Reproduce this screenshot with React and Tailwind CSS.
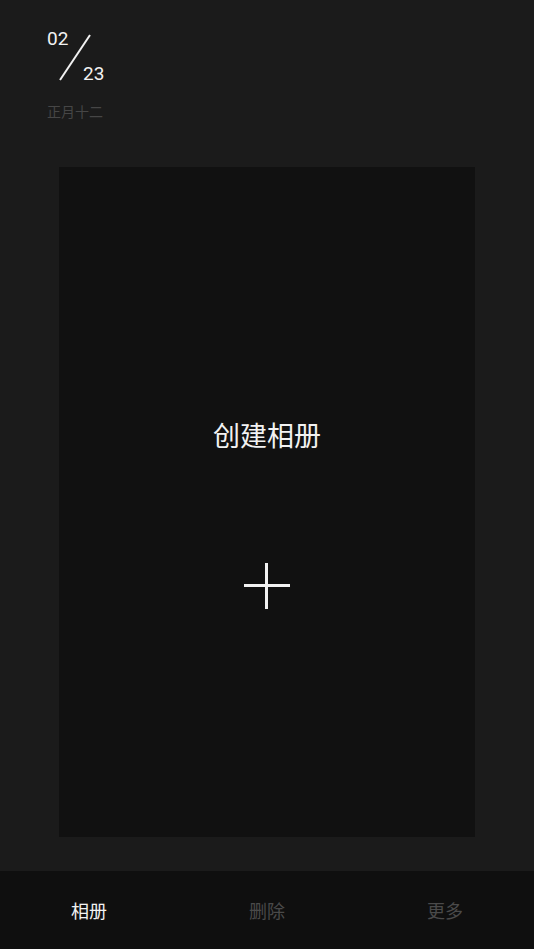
import React from 'react';

const tabs = [
    { label: '相册', active: true },
    { label: '删除', active: false },
    { label: '更多', active: false },
];

const App = () => {
    return (
        <div
            className="w-[534px] h-[949px] bg-[#1b1b1b] flex flex-col overflow-hidden"
            style={{ fontFamily: '"Noto Sans CJK SC", Roboto, sans-serif' }}
        >
            {/* date header */}
            <div className="pl-[47px] pt-[26px] h-[167px] flex flex-col">
                <div className="relative w-[60px] h-[60px]">
                    <span className="absolute left-0 top-0 text-[19px] leading-[26px] text-[#f2f2f2] font-[Roboto]">02</span>
                    <svg className="absolute left-[11px] top-[8px]" width="34" height="48" viewBox="0 0 34 48">
                        <line x1="2" y1="46" x2="32" y2="1" stroke="#f2f2f2" strokeWidth="2" />
                    </svg>
                    <span className="absolute left-[36px] top-[35px] text-[19px] leading-[26px] text-[#f2f2f2] font-[Roboto]">23</span>
                </div>
                <span className="mt-[15px] text-[14px] leading-[20px] text-[#464646]">正月十二</span>
            </div>

            {/* album card */}
            <div className="mx-[59px] h-[670px] bg-[#111111] flex flex-col items-center">
                <span className="mt-[249px] text-[27px] leading-[38px] text-[#f2f2f2]">创建相册</span>
                <svg className="mt-[109px]" width="46" height="46" viewBox="0 0 46 46">
                    <line x1="0" y1="22.5" x2="46" y2="22.5" stroke="#f2f2f2" strokeWidth="3" />
                    <line x1="22.5" y1="0" x2="22.5" y2="46" stroke="#f2f2f2" strokeWidth="3" />
                </svg>
            </div>

            {/* bottom bar */}
            <div className="mt-[34px] h-[78px] bg-[#0f0f0f] grid grid-cols-3">
                {tabs.map((tab) => (
                    <div key={tab.label} className="flex items-center justify-center">
                        <span className={`text-[18px] leading-[24px] ${tab.active ? 'text-[#f2f2f2]' : 'text-[#4a4a4a]'}`}>
                            {tab.label}
                        </span>
                    </div>
                ))}
            </div>
        </div>
    );
};

export default App;
